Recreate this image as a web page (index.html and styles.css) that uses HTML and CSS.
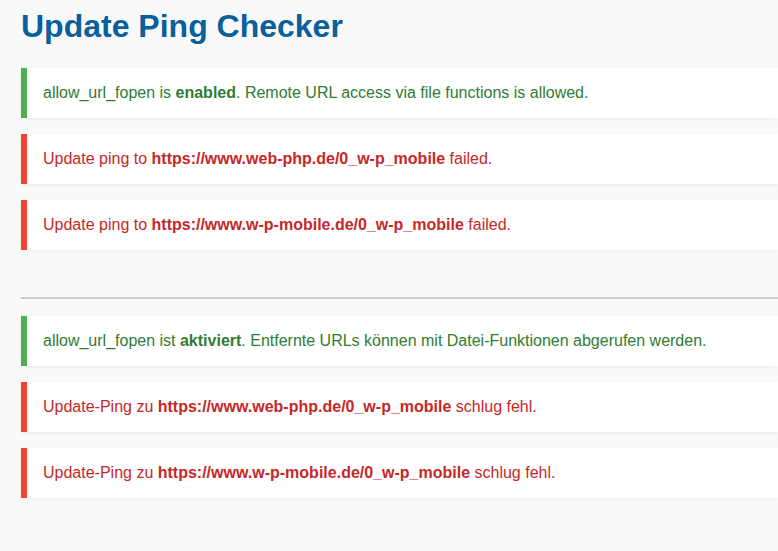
FILE: index.html
```html
<!DOCTYPE html>
<html lang="en">
<head>
<meta charset="utf-8">
<title>Update Ping Checker</title>
<link rel="stylesheet" href="styles.css">
</head>
<body>
<div class="wrap">
  <h1 class="title">Update Ping Checker</h1>
  <div class="notice ok">allow_url_fopen is <strong>enabled</strong>. Remote URL access via file functions is allowed.</div>
  <div class="notice err">Update ping to <strong>https://www.web-php.de/0_w-p_mobile</strong> failed.</div>
  <div class="notice err">Update ping to <strong>https://www.w-p-mobile.de/0_w-p_mobile</strong> failed.</div>
  <hr class="sep">
  <div class="notice ok">allow_url_fopen ist <strong>aktiviert</strong>. Entfernte URLs können mit Datei-Funktionen abgerufen werden.</div>
  <div class="notice err">Update-Ping zu <strong>https://www.web-php.de/0_w-p_mobile</strong> schlug fehl.</div>
  <div class="notice err">Update-Ping zu <strong>https://www.w-p-mobile.de/0_w-p_mobile</strong> schlug fehl.</div>
</div>
</body>
</html>
```
FILE: styles.css
```css
html, body {
  margin: 0;
  padding: 0;
  background: #f9f9f9;
  overflow: hidden;
}
body {
  font-family: "Liberation Sans", Arial, sans-serif;
  font-size: 16px;
}
.wrap {
  padding: 8px 0 0 21px;
}
.title {
  margin: 0 0 23px;
  font-size: 32px;
  line-height: 37px;
  font-weight: bold;
  color: #0a5f9c;
}
.notice {
  background: #fff;
  border-left: 6px solid;
  padding: 15px 16px;
  line-height: 20px;
  margin-bottom: 16px;
  box-shadow: 0 1px 3px rgba(0, 0, 0, 0.06);
  white-space: nowrap;
}
.notice.ok {
  border-left-color: #4caf50;
  color: #2e7d32;
}
.notice.err {
  border-left-color: #f44336;
  color: #c62828;
}
.sep {
  border: 0;
  height: 2px;
  background: #cccccc;
  margin: 47px 0 17px;
}
```
